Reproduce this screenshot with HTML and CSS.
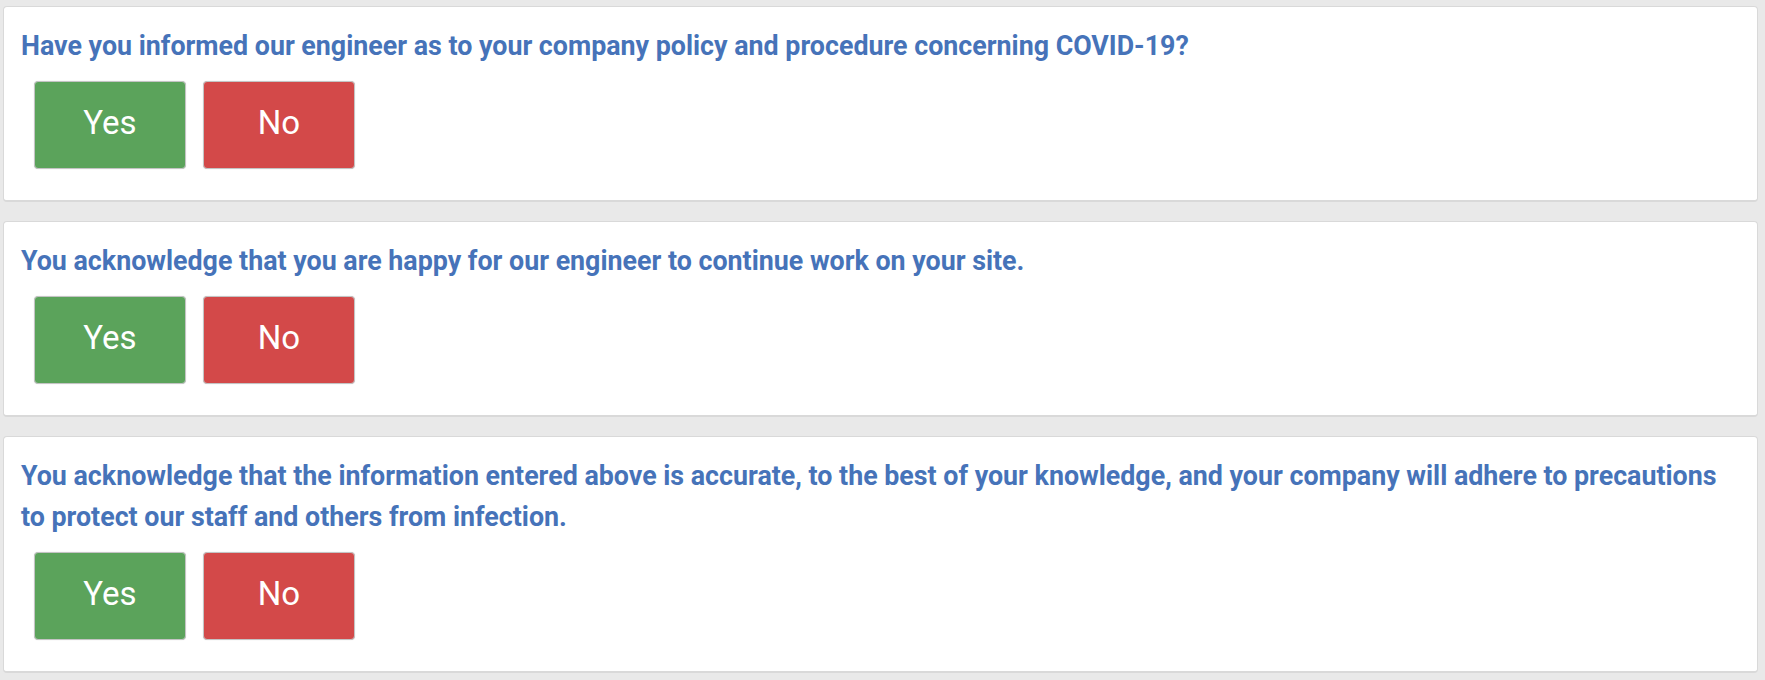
FILE: index.html
```html
<!DOCTYPE html>
<html lang="en">
<head>
<meta charset="utf-8">
<title>COVID-19 questions</title>
<link rel="stylesheet" href="styles.css">
</head>
<body>
<main class="questions">
  <section class="card">
    <p class="question">Have you informed our engineer as to your company policy and procedure concerning COVID-19?</p>
    <div class="actions">
      <button class="btn btn-yes" type="button">Yes</button>
      <button class="btn btn-no" type="button">No</button>
    </div>
  </section>
  <section class="card">
    <p class="question">You acknowledge that you are happy for our engineer to continue work on your site.</p>
    <div class="actions">
      <button class="btn btn-yes" type="button">Yes</button>
      <button class="btn btn-no" type="button">No</button>
    </div>
  </section>
  <section class="card">
    <p class="question">You acknowledge that the information entered above is accurate, to the best of your knowledge, and your company will adhere to precautions to protect our staff and others from infection.</p>
    <div class="actions">
      <button class="btn btn-yes" type="button">Yes</button>
      <button class="btn btn-no" type="button">No</button>
    </div>
  </section>
</main>
</body>
</html>
```
FILE: styles.css
```css
html, body {
  margin: 0;
  padding: 0;
  background: #e9e9e9;
}
body {
  font-family: Roboto, "Liberation Sans", Arial, sans-serif;
}
.questions {
  display: flex;
  flex-direction: column;
  gap: 19px;
  padding: 6px 7px 0 3px;
}
.card {
  background: #fff;
  border: 1px solid #d9d9d9;
  border-bottom-width: 2px;
  border-radius: 4px;
  padding: 19px 18px 31px 17px;
}
.question {
  margin: 0;
  color: #4673b9;
  font-size: 26.8px;
  font-weight: 700;
  line-height: 41px;
}
.actions {
  display: flex;
  gap: 17px;
  margin-top: 14px;
  padding-left: 13px;
}
.btn {
  width: 152px;
  height: 88px;
  border: 1px solid #c4c4c4;
  border-radius: 4px;
  color: #fff;
  font-family: Roboto, "Liberation Sans", Arial, sans-serif;
  font-size: 33px;
  font-weight: 400;
  padding: 0 0 5px 0;
  box-shadow: 0 0 1px rgba(0,0,0,0.2);
}
.btn-yes {
  background: #5ba35b;
}
.btn-no {
  background: #d34949;
}
```
